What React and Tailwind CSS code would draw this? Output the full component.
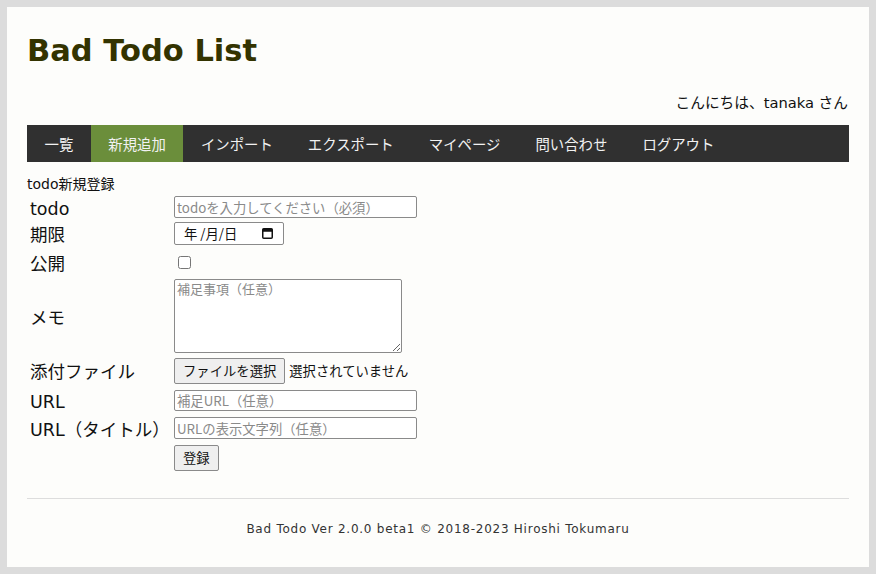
import React from 'react'

const navItems = ['一覧', '新規追加', 'インポート', 'エクスポート', 'マイページ', '問い合わせ', 'ログアウト']

const Row = ({ label, h, children }) => (
    <div className={`flex items-center ${h}`}>
        <div className='w-[147px] pl-[3px] pt-[4px] text-[17.5px] text-[#111]'>{label}</div>
        <div className='flex items-center'>{children}</div>
    </div>
)

const inputCls = "w-[243px] border border-[#8a8a8a] rounded-[2px] bg-white px-[2px] text-[13.33px] text-[#222] placeholder:text-[#8a8a8a] outline-none font-['Noto_Sans_CJK_JP',sans-serif]"
const btnCls = "h-[26px] px-[8px] border border-[#8a8a8a] rounded-[2px] bg-[#efefef] text-[13.33px] text-[#111] font-['Noto_Sans_CJK_JP',sans-serif]"

export default function App() {
    return (
        <div className="w-full h-[574px] bg-[#dcdcdc] p-[7px] font-['DejaVu_Sans','Noto_Sans_CJK_JP',sans-serif]">
            <div className='h-full bg-[#fdfdfb] px-[20px] pt-[26px]'>
                <h1 className="text-[30.5px] leading-[36px] font-bold text-[#333300] font-['DejaVu_Sans',sans-serif]">
                    Bad Todo List
                </h1>

                <div className='mt-[24px] text-right text-[14.7px] leading-[20px] pr-[1px] text-[#111]'>
                    こんにちは、tanaka さん
                </div>

                <nav className='mt-[12px] flex h-[37px] bg-[#303030]'>
                    {navItems.map((item, i) => (
                        <div
                            key={item}
                            className={`flex items-center px-[17.5px] text-[14.4px] text-[#f2f2f2] font-['Noto_Sans_CJK_JP',sans-serif] ${i === 1 ? 'bg-[#6b8e3b]' : ''}`}
                        >
                            {item}
                        </div>
                    ))}
                </nav>

                <div className='mt-[12px] text-[14px] leading-[20px] text-[#111]'>todo新規登録</div>

                <div className='flex flex-col'>
                    <Row label='todo' h='h-[26px]'>
                        <input className={`${inputCls} h-[22px]`} placeholder='todoを入力してください（必須）' />
                    </Row>
                    <Row label='期限' h='h-[27px]'>
                        <div className="flex items-center justify-between w-[110px] h-[23px] border border-[#8a8a8a] rounded-[2px] bg-white pl-[9px] pr-[10px] text-[13.33px] text-[#111] font-['Noto_Sans_CJK_JP',sans-serif]">
                            <span>年&nbsp;/月/日</span>
                            <svg width='11' height='11' viewBox='0 0 11 11'>
                                <rect x='0.75' y='0.75' width='9.5' height='9.5' rx='1' fill='none' stroke='#111' strokeWidth='1.5' />
                                <rect x='0.75' y='0.75' width='9.5' height='3' fill='#111' />
                            </svg>
                        </div>
                    </Row>
                    <Row label='公開' h='h-[30px]'>
                        <input type='checkbox' className='ml-[4px] w-[13px] h-[13px]' />
                    </Row>
                    <Row label='メモ' h='h-[78px]'>
                        <textarea
                            className="w-[228px] h-[74px] border border-[#8a8a8a] rounded-[2px] bg-white px-[2px] text-[13px] leading-[17px] placeholder:text-[#8a8a8a] outline-none font-['Noto_Sans_CJK_JP',sans-serif]"
                            placeholder='補足事項（任意）'
                        />
                    </Row>
                    <Row label='添付ファイル' h='h-[31px]'>
                        <button className={btnCls}>ファイルを選択</button>
                        <span className="ml-[4px] text-[13.33px] text-[#111] font-['Noto_Sans_CJK_JP',sans-serif]">選択されていません</span>
                    </Row>
                    <Row label='URL' h='h-[28px]'>
                        <input className={`${inputCls} h-[21px]`} placeholder='補足URL（任意）' />
                    </Row>
                    <Row label='URL（タイトル）' h='h-[28px]'>
                        <input className={`${inputCls} h-[22px]`} placeholder='URLの表示文字列（任意）' />
                    </Row>
                    <Row label='' h='h-[32px]'>
                        <button className={btnCls}>登録</button>
                    </Row>
                </div>

                <div className='mt-[24px] border-t border-[#dddddd]' />
                <div className="mt-[22px] text-center text-[12px] leading-[16px] tracking-[0.75px] text-[#333] font-['DejaVu_Sans',sans-serif]">
                    Bad Todo Ver 2.0.0 beta1 © 2018-2023 Hiroshi Tokumaru
                </div>
            </div>
        </div>
    )
}
